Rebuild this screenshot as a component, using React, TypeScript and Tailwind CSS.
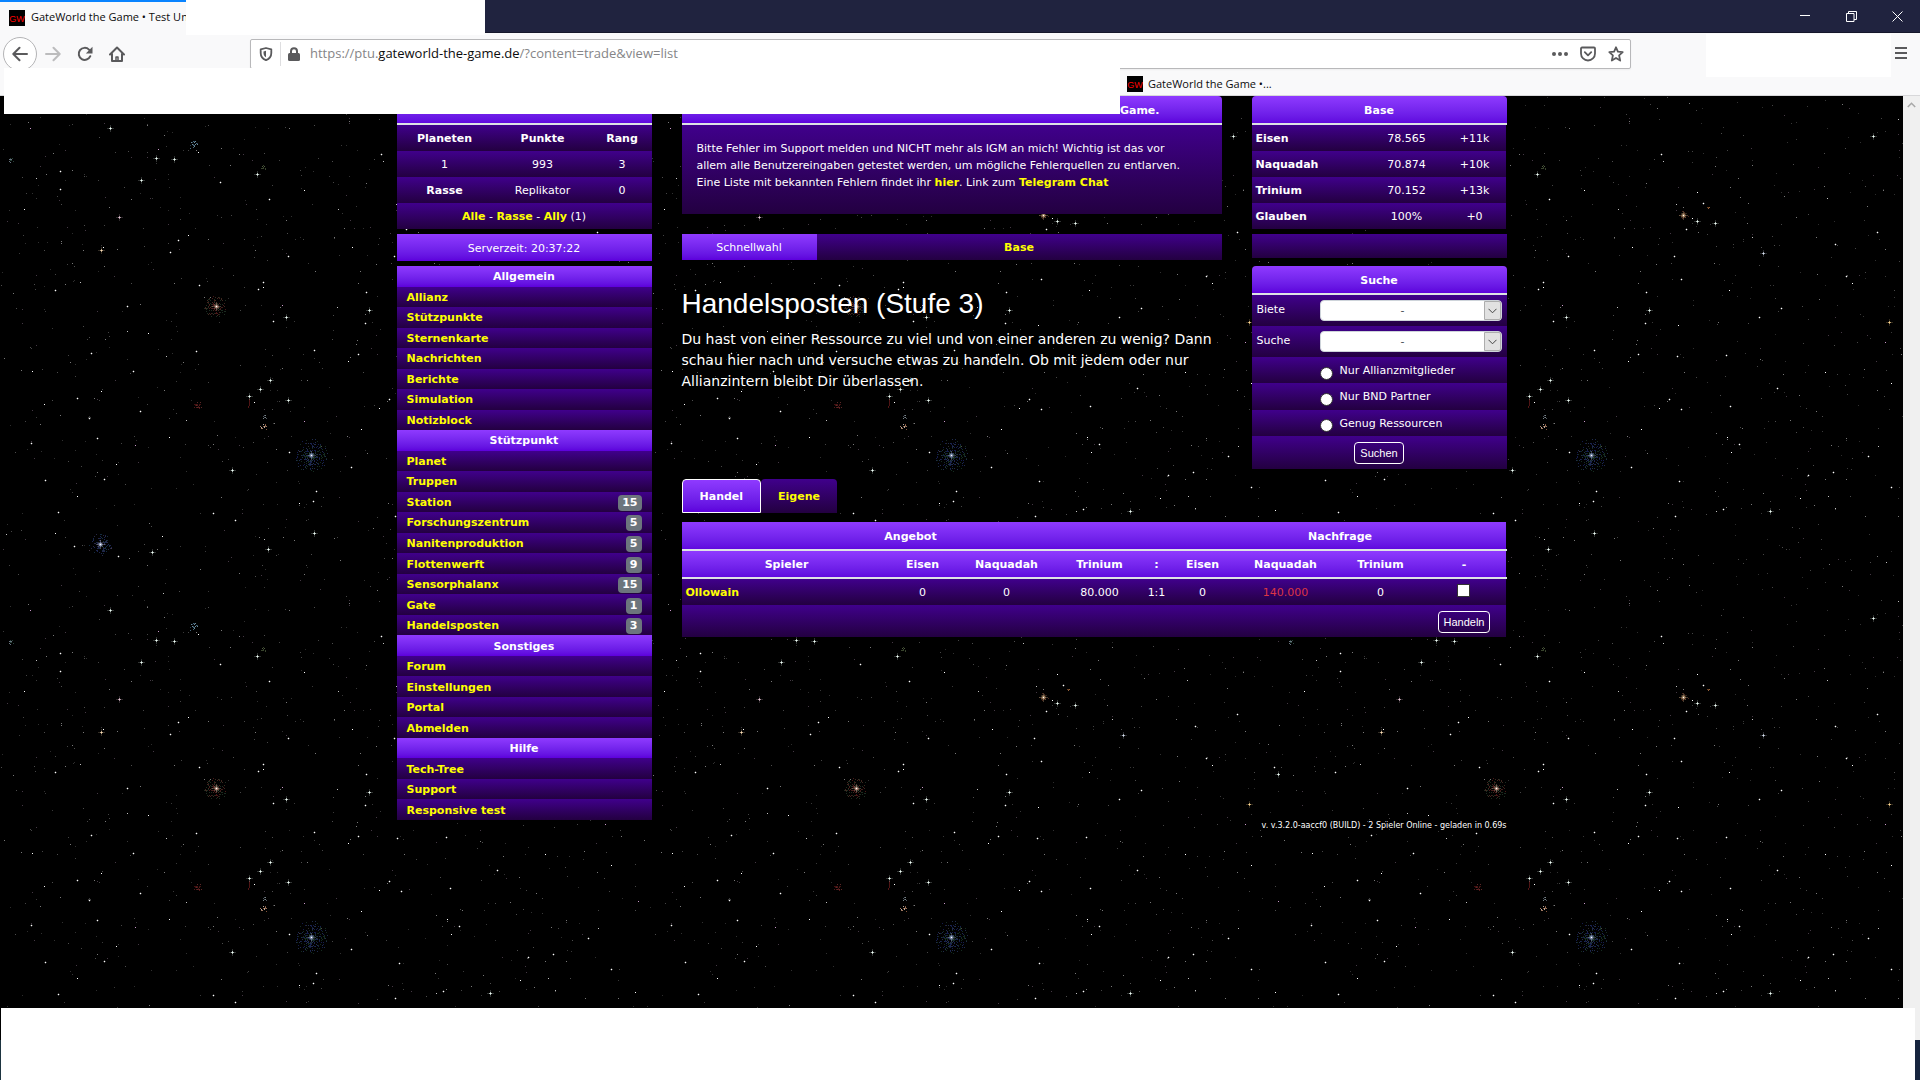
import { type ReactNode } from "react";
import clsx from "clsx";

const headGradient = "bg-linear-to-b from-[#8f3aff] to-[#5d00dc]";
const rowGradient = "bg-linear-to-b from-[#40008c] to-[#230041]";
const linkClass = "font-bold text-[#ffff00] hover:underline";
const tableClass = "w-full table-fixed border-separate border-spacing-0 text-center [&_td]:pt-0.5 [&_th]:pt-0.5";
const uiFont = "font-['Open_Sans','Noto_Sans',sans-serif]";

type MenuEntry = { label: string; level?: number };
type MenuSection = { title: string; entries: MenuEntry[] };

const menu: MenuSection[] = [
  {
    title: "Allgemein",
    entries: [
      { label: "Allianz" },
      { label: "Stützpunkte" },
      { label: "Sternenkarte" },
      { label: "Nachrichten" },
      { label: "Berichte" },
      { label: "Simulation" },
      { label: "Notizblock" },
    ],
  },
  {
    title: "Stützpunkt",
    entries: [
      { label: "Planet" },
      { label: "Truppen" },
      { label: "Station", level: 15 },
      { label: "Forschungszentrum", level: 5 },
      { label: "Nanitenproduktion", level: 5 },
      { label: "Flottenwerft", level: 9 },
      { label: "Sensorphalanx", level: 15 },
      { label: "Gate", level: 1 },
      { label: "Handelsposten", level: 3 },
    ],
  },
  {
    title: "Sonstiges",
    entries: [
      { label: "Forum" },
      { label: "Einstellungen" },
      { label: "Portal" },
      { label: "Abmelden" },
    ],
  },
  {
    title: "Hilfe",
    entries: [{ label: "Tech-Tree" }, { label: "Support" }, { label: "Responsive test" }],
  },
];

const resources = [
  { name: "Eisen", amount: "78.565", rate: "+11k" },
  { name: "Naquadah", amount: "70.874", rate: "+10k" },
  { name: "Trinium", amount: "70.152", rate: "+13k" },
  { name: "Glauben", amount: "100%", rate: "+0" },
];

/* ---------- star field ---------- */

const TILE_W = 640;
const TILE_H = 482;

const crossStars: [number, number, string?][] = [
  [110, 32], [156, 62], [174, 63], [141, 84], [119, 121, "#e8c8d8"], [101, 154, "#ffe0b8"],
  [257, 78], [286, 221], [270, 284], [260, 293], [249, 300], [288, 304], [232, 374],
  [369, 214], [314, 437], [268, 453], [152, 456], [483, 157, "#d8e0f0"], [638, 196],
  [609, 226, "#ffd890"], [490, 415], [593, 40], [417, 125], [435, 127],
];

const brightStars: [number, number][] = [
  [198, 56], [60, 75], [60, 93], [24, 113], [220, 86], [269, 103], [188, 139], [178, 144],
  [170, 156], [103, 151], [199, 189], [263, 186], [263, 191], [258, 193], [127, 210],
  [148, 237], [91, 257], [133, 275], [101, 295], [77, 302], [273, 225], [254, 306],
  [314, 254], [358, 258], [348, 265], [365, 227], [366, 196], [352, 151], [394, 160],
  [381, 58], [304, 94], [288, 160], [196, 255], [44, 308], [140, 315], [97, 342],
  [169, 341], [31, 347], [289, 356], [116, 368], [104, 383], [45, 384], [77, 400],
  [316, 395], [313, 405], [299, 407], [213, 417], [235, 424], [55, 437], [74, 450],
  [118, 460], [361, 333], [351, 371], [389, 303], [379, 312], [89, 321], [89, 322],
  [32, 275], [55, 194], [58, 416], [162, 440], [395, 420], [401, 183], [449, 194],
  [479, 221], [566, 180], [572, 187], [634, 189], [555, 148], [545, 276], [450, 310],
  [459, 348], [447, 341], [553, 376], [528, 379], [520, 402], [399, 385], [501, 212],
  [398, 229], [401, 313], [497, 292], [451, 356], [588, 360], [611, 391],
  [635, 414], [443, 413], [597, 136], [611, 287], [446, 259], [397, 260], [417, 96],
  [423, 107], [406, 133], [412, 122],
];

const halos: { x: number; y: number; r: number; tints: string[]; core: string }[] = [
  { x: 216, y: 210, r: 12, tints: ["#481818", "#402820", "#1c2c20"], core: "#f0c8b0" },
  { x: 311, y: 359, r: 17, tints: ["#141c4c", "#202c4c", "#142c20"], core: "#b8c8f0" },
  { x: 100, y: 448, r: 11, tints: ["#1c2450", "#142c40", "#282844"], core: "#d8e0ff" },
  { x: 403, y: 119, r: 5, tints: ["#4c2418", "#342418"], core: "#f0c898" },
];

const smudges: [number, number, number, string[]][] = [
  [193, 48, 5, ["#46687c", "#283c50", "#6c8c98"]],
  [11, 64, 3, ["#687480", "#284038"]],
  [263, 71, 3, ["#505c40", "#38442c"]],
  [198, 309, 4, ["#501818", "#401010", "#5c2828"]],
  [264, 321, 2, ["#788488", "#505860"]],
  [264, 330, 4, ["#a07860", "#805438", "#b8a8a0"]],
  [428, 111, 1, ["#986038", "#684020"]],
];

function seeded(seed: number) {
  let s = seed;
  return () => {
    s = (s * 16807) % 2147483647;
    return s / 2147483647;
  };
}

const dot = (x: number, y: number) => `M${x} ${y}h1v1h-1z`;

function buildFaintLayers() {
  const rand = seeded(4711);
  const layers: Record<string, string> = {};
  const add = (color: string, x: number, y: number) => {
    layers[color] = (layers[color] ?? "") + dot(Math.round(x), Math.round(y));
  };
  const greys = ["#2c2c2c", "#383838", "#444444", "#303030", "#4c4c4c", "#787878", "#443844"];
  for (let i = 0; i < 850; i++) {
    add(greys[Math.floor(rand() * greys.length)], rand() * (TILE_W - 1), rand() * (TILE_H - 1));
  }
  for (let i = 0; i < 28; i++) {
    add(i % 4 ? "#c0c0c0" : "#c898c8", rand() * (TILE_W - 1), rand() * (TILE_H - 1));
  }
  for (const h of halos) {
    for (let i = 0; i < h.r * h.r; i++) {
      const a = rand() * Math.PI * 2;
      const d = rand() * h.r;
      add(h.tints[i % h.tints.length], h.x + Math.cos(a) * d, h.y + Math.sin(a) * d);
    }
  }
  for (const [x, y, r, tints] of smudges) {
    for (let i = 0; i < r * 5; i++) {
      const a = rand() * Math.PI * 2;
      const d = rand() * r;
      add(tints[i % tints.length], x + Math.cos(a) * d, y + Math.sin(a) * d);
    }
  }
  for (let i = 0; i < 9; i++) add("#501414", 249 + (i > 6 ? -1 : 0), 303 + i);
  return Object.entries(layers);
}

const faintLayers = buildFaintLayers();

function StarField() {
  return (
    <svg aria-hidden="true" className="absolute inset-0 h-full w-full" shapeRendering="crispEdges">
      <defs>
        <pattern id="stars" width={TILE_W} height={TILE_H} patternUnits="userSpaceOnUse">
          <rect width={TILE_W} height={TILE_H} fill="#000" />
          {faintLayers.map(([color, d]) => (
            <path key={color} d={d} fill={color} />
          ))}
          {brightStars.map(([x, y], i) => (
            <g key={i}>
              {i % 3 ? (
                <path d={`M${x - 1} ${y}h3v1h-3zM${x} ${y - 1}h1v3h-1z`} fill="#3c3c3c" />
              ) : null}
              <path d={dot(x, y)} fill="#fff" />
            </g>
          ))}
          {crossStars.map(([x, y, color = "#f0fff8"], i) => (
            <g key={i} fill={color}>
              <path d={`M${x - 3} ${y}h7v1h-7zM${x} ${y - 3}h1v7h-1z`} opacity={0.2} />
              <path d={`M${x - 1} ${y}h3v1h-3zM${x} ${y - 1}h1v3h-1z`} opacity={0.65} />
              <path d={dot(x, y)} />
            </g>
          ))}
          {halos.map(({ x, y, core }) => (
            <g key={x} fill={core}>
              <rect x={x - 2} y={y - 2} width={5} height={5} opacity={0.2} />
              <path d={`M${x - 4} ${y}h9v1h-9zM${x} ${y - 4}h1v9h-1z`} opacity={0.3} />
              <rect x={x - 1} y={y - 1} width={3} height={3} opacity={0.4} />
              <path d={dot(x, y)} fill="#fff" />
            </g>
          ))}
        </pattern>
      </defs>
      <rect width="100%" height="100%" fill="url(#stars)" />
    </svg>
  );
}

/* ---------- browser window ---------- */

function Favicon() {
  return (
    <svg viewBox="0 0 16 16" className="h-4 w-4 shrink-0" aria-hidden="true">
      <rect width="16" height="16" fill="#000" />
      <text x="8" y="12" textAnchor="middle" fontSize="9" fill="#f00" fontFamily="Liberation Sans">
        GW
      </text>
    </svg>
  );
}

function TitleBar() {
  return (
    <div className="flex h-[33px] items-start border-b border-[#15172b] bg-[#20233f]">
      <div className="flex h-[33px] w-[186px] items-center gap-1.5 border-t-2 border-[#0a84ff] bg-[#f9f9fa] pl-[9px] text-[11px] whitespace-nowrap text-[#0c0c0d]">
        <Favicon />
        <span>GateWorld the Game • Test Un</span>
      </div>
      <div className="relative z-10 h-[35px] w-[299px] bg-white" />
      <div className="ml-auto flex text-white">
        <button type="button" aria-label="Minimieren" className="flex h-8 w-[46px] items-center justify-center">
          <svg width="10" height="10" viewBox="0 0 10 10" shapeRendering="crispEdges">
            <path d="M0 4h10v1H0z" fill="currentColor" />
          </svg>
        </button>
        <button type="button" aria-label="Wiederherstellen" className="flex h-8 w-[46px] items-center justify-center">
          <svg width="11" height="11" viewBox="0 0 11 11" fill="none" stroke="currentColor">
            <path d="M.5 2.5h7.500v8H.5zM2.500 2.500v-2h8v8h-2.500" />
          </svg>
        </button>
        <button type="button" aria-label="Schließen" className="flex h-8 w-[46px] items-center justify-center">
          <svg width="11" height="11" viewBox="0 0 11 11" fill="none" stroke="currentColor">
            <path d="M.5.5l10 10M10.500.5l-10 10" />
          </svg>
        </button>
      </div>
    </div>
  );
}

function NavBar() {
  return (
    <div className="flex h-10 items-center pt-px pr-[13px] pl-[3px] text-[#5a5a5c]">
      <button
        type="button"
        aria-label="Zurück"
        className="flex h-[34px] w-[34px] shrink-0 items-center justify-center rounded-full border border-[#b4b4b6] bg-white"
      >
        <svg width="16" height="16" viewBox="0 0 16 16" fill="none" stroke="currentColor" strokeWidth="2" strokeLinecap="round" strokeLinejoin="round">
          <path d="M15 8H1.500M7.500 1.800L1.300 8l6.200 6.200" />
        </svg>
      </button>
      <button type="button" aria-label="Vor" disabled className="ml-2 text-[#bcbcbd]">
        <svg width="16" height="16" viewBox="0 0 16 16" fill="none" stroke="currentColor" strokeWidth="2" strokeLinecap="round" strokeLinejoin="round">
          <path d="M1 8h13.500M8.500 1.800L14.700 8l-6.200 6.200" />
        </svg>
      </button>
      <button type="button" aria-label="Neu laden" className="ml-4">
        <svg width="16" height="16" viewBox="0 0 16 16" fill="none" stroke="currentColor" strokeWidth="2" strokeLinecap="round">
          <path d="M13.300 10.200A6 6 0 1 1 12 3.600l1.500 1.500" />
          <path d="M15.500.8v6.700H8.800z" fill="currentColor" stroke="none" />
        </svg>
      </button>
      <button type="button" aria-label="Startseite" className="ml-4">
        <svg width="16" height="16" viewBox="0 0 16 16" fill="none" stroke="currentColor" strokeWidth="2" strokeLinecap="round" strokeLinejoin="round">
          <path d="M1 8.500L8 1.500l7 7M3 8v7h10V8" />
          <path d="M7 15v-4h2v4" strokeWidth="1.500" />
        </svg>
      </button>

      <div className="ml-[125px] flex h-[30px] w-[1381px] min-w-0 items-center rounded-xs border border-[#b8b8ba] bg-white pr-1.5 pl-2 shadow-xs">
        <svg width="14" height="14" viewBox="0 0 14 14" fill="none" stroke="currentColor" className="shrink-0">
          <path d="M7 1L12.300 2.300V6c0 3.800-2.200 6-5.300 7.200C3.900 12 1.700 9.800 1.700 6V2.300z" strokeWidth="1.800" strokeLinejoin="round" />
          <path d="M7 3.800v6.400C5.300 9.200 4.500 8 4.500 6V4.400z" fill="currentColor" stroke="none" />
        </svg>
        <span className="ml-[7px] h-6 w-px bg-[#dedee0]" />
        <svg width="12" height="14" viewBox="0 0 12 14" className="ml-[7px] shrink-0">
          <rect y="6" width="12" height="8" rx="1.500" fill="currentColor" />
          <path d="M3 7V4.200a3 3 0 0 1 6 0V7" fill="none" stroke="currentColor" strokeWidth="2" />
        </svg>
        <span className="ml-2.5 flex-1 truncate text-[13px] text-[#858587]">
          https://ptu.<span className="text-[#0c0c0d]">gateworld-the-game.de</span>/?content=trade&amp;view=list
        </span>
        <button type="button" aria-label="Seitenaktionen">
          <svg width="16" height="4" viewBox="0 0 16 4" fill="currentColor">
            <circle cx="2" cy="2" r="2" />
            <circle cx="8" cy="2" r="2" />
            <circle cx="14" cy="2" r="2" />
          </svg>
        </button>
        <button type="button" aria-label="Pocket" className="ml-3">
          <svg width="16" height="16" viewBox="0 0 16 16" fill="none" stroke="currentColor" strokeWidth="1.800" strokeLinecap="round" strokeLinejoin="round">
            <path d="M2 1.500h12a1 1 0 0 1 1 1v5a7 7 0 0 1-14 0v-5a1 1 0 0 1 1-1z" />
            <path d="M4.800 6.200L8 9.300l3.200-3.100" />
          </svg>
        </button>
        <button type="button" aria-label="Lesezeichen setzen" className="ml-3">
          <svg width="16" height="16" viewBox="0 0 16 16" fill="none" stroke="currentColor" strokeWidth="1.800" strokeLinejoin="round">
            <path d="M8 1.300l1.900 4.400 4.800.5-3.600 3.200 1.100 5.200L8 12l-4.200 2.600 1.100-5.200-3.600-3.200 4.800-.5z" />
          </svg>
        </button>
      </div>

      <button type="button" aria-label="Menü" className="ml-auto">
        <svg width="12" height="13" viewBox="0 0 12 13" fill="currentColor" shapeRendering="crispEdges">
          <path d="M0 0h12v2H0zM0 5h12v2H0zM0 10h12v2H0z" />
        </svg>
      </button>
    </div>
  );
}

function BrowserChrome() {
  return (
    <header className={clsx("relative z-10 bg-[#f9f9fa]", uiFont)}>
      <TitleBar />
      <NavBar />
      <div className="flex h-[23px] items-center border-b border-[#d8d8da] pl-[1127px] text-[11px] text-[#0c0c0d]">
        <a href="#" className="flex items-center gap-[5px]">
          <Favicon />
          GateWorld the Game •...
        </a>
      </div>
      <div className="absolute top-[68px] left-1 h-[46px] w-[1116px] bg-white" />
      <div className="absolute top-[34px] right-[29px] h-[43px] w-[185px] bg-white" />
    </header>
  );
}

/* ---------- game page ---------- */

function HeadRow({ children, colSpan }: { children?: ReactNode; colSpan: number }) {
  return (
    <tr className={headGradient}>
      <th colSpan={colSpan} className="h-[29px] border-b-2 border-[#dee2e6]">
        {children}
      </th>
    </tr>
  );
}

function PlayerTable() {
  return (
    <table className={tableClass}>
      <colgroup>
        <col className="w-24" />
        <col className="w-[100px]" />
        <col />
      </colgroup>
      <tbody>
        <HeadRow colSpan={3} />
        <tr className={rowGradient}>
          <th className="h-[26px]">Planeten</th>
          <th>Punkte</th>
          <th>Rang</th>
        </tr>
        <tr className={rowGradient}>
          <td className="h-[26px]">1</td>
          <td>993</td>
          <td>3</td>
        </tr>
        <tr className={rowGradient}>
          <th className="h-[26px]">Rasse</th>
          <td>Replikator</td>
          <td>0</td>
        </tr>
        <tr className={rowGradient}>
          <td colSpan={3} className="h-[26px]">
            <a href="#" className={linkClass}>Alle</a> - <a href="#" className={linkClass}>Rasse</a> -{" "}
            <a href="#" className={linkClass}>Ally</a> (1)
          </td>
        </tr>
      </tbody>
    </table>
  );
}

function SideMenu() {
  return (
    <nav className="mt-[5px] grid h-[554px] auto-rows-fr">
      {menu.flatMap((section) => [
        <h2 key={section.title} className={clsx("flex items-center justify-center pt-0.5 font-bold", headGradient)}>
          {section.title}
        </h2>,
        ...section.entries.map(({ label, level }) => (
          <a
            key={label}
            href="#"
            className={clsx("flex items-center justify-between px-2.5 pt-0.5", rowGradient, linkClass)}
          >
            {label}
            {level ? (
              <span className="rounded bg-[#6c757d] px-1 leading-4 text-white">{level}</span>
            ) : null}
          </a>
        )),
      ])}
    </nav>
  );
}

function ResourceTable() {
  return (
    <table className={clsx("overflow-hidden rounded-t", tableClass)}>
      <colgroup>
        <col />
        <col className="w-[72px]" />
        <col className="w-16" />
      </colgroup>
      <tbody>
        <HeadRow colSpan={3}>Base</HeadRow>
        {resources.map((r) => (
          <tr key={r.name} className={rowGradient}>
            <th className="h-[26px] pl-1 text-left">{r.name}</th>
            <td>{r.amount}</td>
            <td>{r.rate}</td>
          </tr>
        ))}
      </tbody>
    </table>
  );
}

function SelectRow({ id, label }: { id: string; label: string }) {
  return (
    <div className={clsx("flex h-[31px] items-center px-[5px]", rowGradient)}>
      <label htmlFor={id} className="w-[63px] pb-0.5">
        {label}
      </label>
      <div className="relative flex-1">
        <select
          id={id}
          className="block h-[21px] w-full appearance-none rounded border border-[#ced4da] bg-white pr-4 text-center text-[11px] leading-[19px] text-[#495057]"
        >
          <option>-</option>
        </select>
        <span className="pointer-events-none absolute top-px right-px flex h-[19px] w-[17px] items-center justify-center rounded-r-xs border border-[#adadad] bg-[#e1e1e1]">
          <svg width="9" height="6" viewBox="0 0 9 6" fill="none" stroke="#444">
            <path d="M.5.8l4 4 4-4" />
          </svg>
        </span>
      </div>
    </div>
  );
}

function SearchPanel() {
  return (
    <form className="mt-2">
      <h2
        className={clsx(
          "flex h-[29px] items-center justify-center rounded-t border-b-2 border-[#dee2e6] pt-0.5 font-bold",
          headGradient,
        )}
      >
        Suche
      </h2>
      <SelectRow id="biete" label="Biete" />
      <SelectRow id="suche" label="Suche" />
      <div className="grid h-[79px] auto-rows-fr">
        {["Nur Allianzmitglieder", "Nur BND Partner", "Genug Ressourcen"].map((option) => (
          <label key={option} className={clsx("flex items-center gap-[7px] pt-0.5 pl-[68px]", rowGradient)}>
            <input
              type="radio"
              name="filter"
              className="mt-1 h-[13px] w-[13px] appearance-none rounded-full border border-[#333] bg-white checked:border-4"
            />
            {option}
          </label>
        ))}
      </div>
      <div className={clsx("flex h-[33px] items-center justify-center", rowGradient)}>
        <ActionButton>Suchen</ActionButton>
      </div>
    </form>
  );
}

function ActionButton({ children }: { children: ReactNode }) {
  return (
    <button
      type="button"
      className="h-[22px] rounded border border-white px-[5px] font-['Liberation_Sans',Arial,sans-serif] text-[11px] text-white"
    >
      {children}
    </button>
  );
}

function News() {
  return (
    <section>
      <h2
        className={clsx(
          "flex h-[29px] items-center justify-end rounded-t border-b-2 border-[#dee2e6] pt-0.5 pr-[62px] font-bold",
          headGradient,
        )}
      >
        Game.
      </h2>
      <p className={clsx("h-[89px] px-[15px] pt-[15px] leading-[17px]", rowGradient)}>
        Bitte Fehler im Support melden und NICHT mehr als IGM an mich! Wichtig ist das vor
        <br />
        allem alle Benutzereingaben getestet werden, um mögliche Fehlerquellen zu entlarven.
        <br />
        Eine Liste mit bekannten Fehlern findet ihr <a href="#" className={linkClass}>hier</a>. Link zum{" "}
        <a href="#" className={linkClass}>Telegram Chat</a>
      </p>
    </section>
  );
}

function TradeTable() {
  return (
    <table className={clsx("mt-[9px]", tableClass)}>
      <colgroup>
        <col />
        <col className="w-[62px]" />
        <col className="w-[106px]" />
        <col className="w-20" />
        <col className="w-[34px]" />
        <col className="w-[58px]" />
        <col className="w-[108px]" />
        <col className="w-[82px]" />
        <col className="w-[85px]" />
      </colgroup>
      <thead className="[&_th]:border-b-2 [&_th]:border-[#dee2e6]">
        <tr className={headGradient}>
          <th colSpan={4} className="h-[29px]">Angebot</th>
          <th />
          <th colSpan={4}>Nachfrage</th>
        </tr>
        <tr className={headGradient}>
          <th className="h-7">Spieler</th>
          <th>Eisen</th>
          <th>Naquadah</th>
          <th>Trinium</th>
          <th>:</th>
          <th>Eisen</th>
          <th>Naquadah</th>
          <th>Trinium</th>
          <th>-</th>
        </tr>
      </thead>
      <tbody>
        <tr className={rowGradient}>
          <td className="h-[26px] pl-1 text-left">
            <a href="#" className={linkClass}>Ollowain</a>
          </td>
          <td>0</td>
          <td>0</td>
          <td>80.000</td>
          <td>1:1</td>
          <td>0</td>
          <td className="text-[#dc3545]">140.000</td>
          <td>0</td>
          <td>
            <input
              type="checkbox"
              aria-label="Angebot von Ollowain"
              className="mx-auto mb-1.5 block h-[13px] w-[13px] appearance-none border border-[#333] bg-white checked:bg-[#5d00dc]"
            />
          </td>
        </tr>
        <tr className={rowGradient}>
          <td colSpan={8} className="h-8" />
          <td>
            <ActionButton>Handeln</ActionButton>
          </td>
        </tr>
      </tbody>
    </table>
  );
}

export default function App() {
  return (
    <div className="flex min-h-screen flex-col bg-black">
      <BrowserChrome />
      <div className="flex flex-1">
        <div className="relative flex-1 overflow-hidden bg-black font-['DejaVu_Sans',Verdana,sans-serif] text-[11px] leading-4 text-white">
          <StarField />
          <div className="relative mx-auto flex max-w-[1140px]">
            <aside className="w-1/4 px-[15px]">
              <PlayerTable />
              <div className={clsx("mt-[5px] flex h-[27px] items-center justify-center pt-0.5", headGradient)}>
                Serverzeit: 20:37:22
              </div>
              <SideMenu />
            </aside>

            <main className="w-3/4 px-[15px]">
              <div className="flex gap-[30px]">
                <div className="flex-1">
                  <News />
                  <div className="mt-5 flex h-[26px] text-center leading-[28px]">
                    <span className={clsx("w-1/4", headGradient)}>Schnellwahl</span>
                    <a href="#" className={clsx("flex-1", rowGradient, linkClass)}>Base</a>
                  </div>
                  <h1 className="mt-[27px] font-['Liberation_Sans',Arial,sans-serif] text-[28px] leading-[34px]">
                    Handelsposten (Stufe 3)
                  </h1>
                  <p className="mt-2 text-[14px] leading-[21px]">
                    Du hast von einer Ressource zu viel und von einer anderen zu wenig? Dann
                    <br />
                    schau hier nach und versuche etwas zu handeln. Ob mit jedem oder nur
                    <br />
                    Allianzintern bleibt Dir überlassen.
                  </p>
                </div>
                <div className="w-[255px]">
                  <ResourceTable />
                  <div className={clsx("mt-[5px] h-6", rowGradient)} />
                  <SearchPanel />
                </div>
              </div>

              <div className="mt-2.5 flex h-[34px] font-bold">
                <button type="button" className={clsx("rounded-t border border-white px-[17px] pt-0.5", headGradient)}>
                  Handel
                </button>
                <button type="button" className={clsx("rounded-t px-[17px] pt-0.5 text-[#ffff00]", rowGradient)}>
                  Eigene
                </button>
              </div>
              <TradeTable />
              <p className="mt-[181px] text-right text-[8px]">
                v. v.3.2.0-aaccf0 (BUILD) - 2 Spieler Online - geladen in 0.69s
              </p>
            </main>
          </div>
        </div>
        <div className="flex w-[17px] justify-center bg-[#f0f0f0] pt-1.5">
          <svg width="9" height="6" viewBox="0 0 9 6" fill="none" stroke="#a8a8a8" strokeWidth="1.500">
            <path d="M.8 5l3.700-3.700L8.200 5" />
          </svg>
        </div>
      </div>
      <footer className="flex h-[72px]">
        <div className="mt-8 w-px bg-[#1d3440]" />
        <div className="flex-1 bg-white" />
        <div className="w-[5px] border-t-[32px] border-[#f0f0f0] bg-[#16243e]" />
      </footer>
    </div>
  );
}
